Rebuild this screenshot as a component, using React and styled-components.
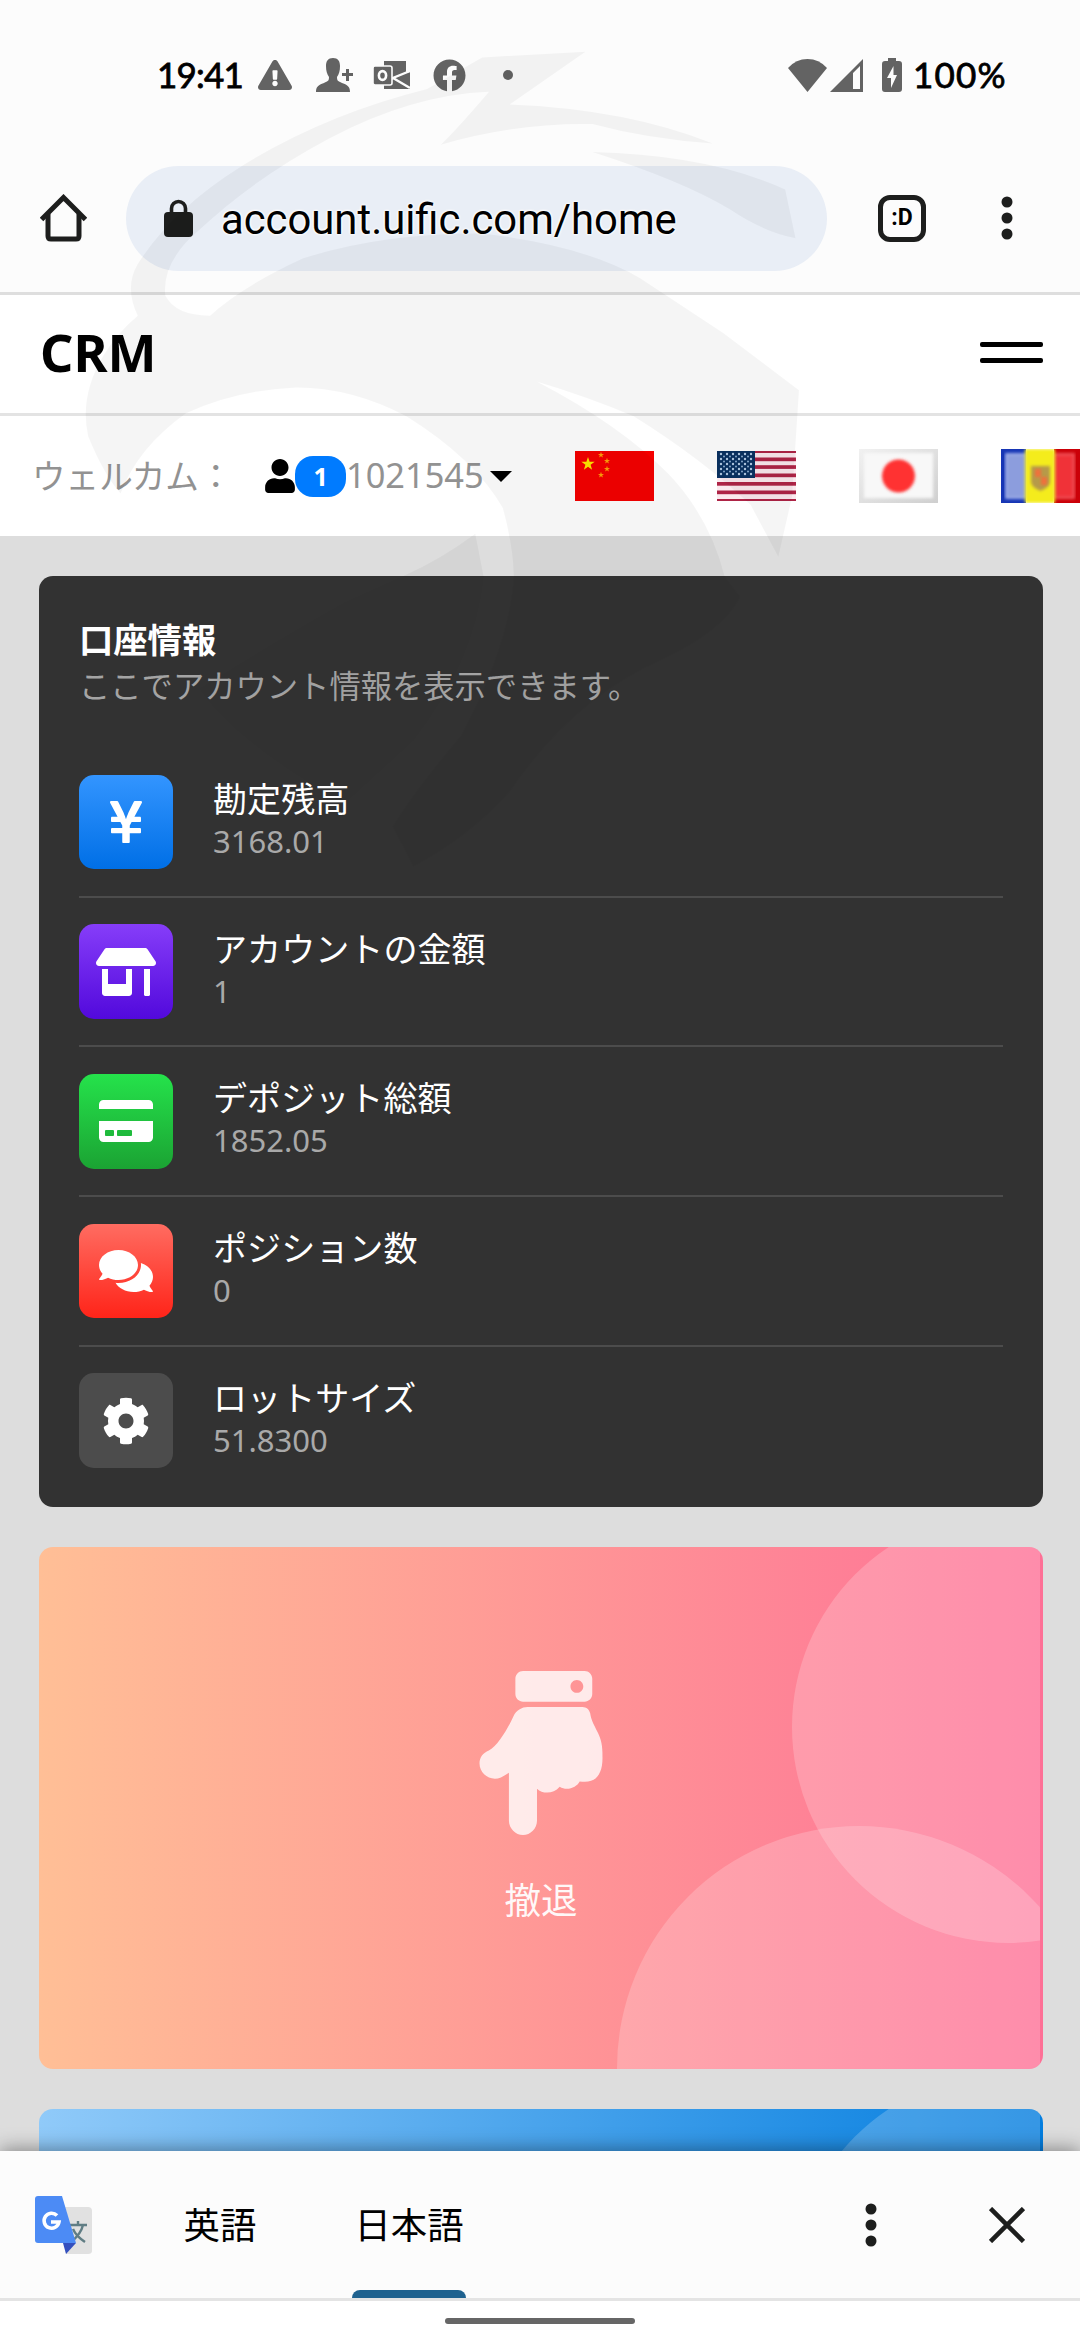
import styled, { createGlobalStyle, css } from "styled-components";
import {
  FaCog,
  FaComments,
  FaCreditCard,
  FaExclamationTriangle,
  FaFacebook,
  FaHandPointDown,
  FaStoreAlt,
  FaUser,
  FaYenSign,
} from "react-icons/fa";

const GlobalStyle = createGlobalStyle`
  * {
    box-sizing: border-box;
  }
  body {
    margin: 0;
    background: #ffffff;
    font-family: "Noto Sans", "Noto Sans CJK JP", sans-serif;
  }
  svg {
    display: block;
    flex-shrink: 0;
  }
`;

const Screen = styled.div`
  position: relative;
  display: flex;
  flex-direction: column;
  width: 1080px;
  height: 2340px;
  overflow: hidden;
`;

/* ---------- phone status bar ---------- */

const StatusBar = styled.div`
  display: flex;
  align-items: center;
  height: 150px;
  padding-left: 157px;
  background: #fcfcfc;
  color: #636363;
`;

const StatusText = styled.span`
  width: ${(p) => p.$width}px;
  margin-left: ${(p) => p.$ml || 0}px;
  padding-bottom: 2px;
  color: #000;
  font-family: Lato, sans-serif;
  font-size: 35px;
  font-weight: 400;
  line-height: 42px;
  letter-spacing: ${(p) => p.$spacing || 0}px;
  white-space: nowrap;
  -webkit-text-stroke: 0.8px #000;
`;

const StatusIcon = styled.span`
  display: flex;
  margin-left: ${(p) => p.$ml}px;
`;

const Spacer = styled.span`
  flex: 1;
`;

const Dot = styled.span`
  width: 10px;
  height: 10px;
  margin-left: 37px;
  border-radius: 50%;
  background: #636363;
`;

/* ---------- browser toolbar ---------- */

const Toolbar = styled.div`
  display: flex;
  align-items: center;
  height: 145px;
  padding: 0 66px 6px 40px;
  border-bottom: 3px solid #dedede;
  background: #fcfcfc;
`;

const AddressBar = styled.div`
  display: flex;
  align-items: center;
  width: 701px;
  height: 105px;
  margin: 0 51px 0 39px;
  padding-left: 38px;
  border-radius: 53px;
  background: #e9eef6;
`;

const Url = styled.span`
  margin-left: 28px;
  padding-top: 4px;
  color: #000;
  font-family: Roboto, sans-serif;
  font-size: 41.8px;
  line-height: 50px;
  white-space: nowrap;
  text-shadow: 0 0 3px #fff, 0 0 3px #fff, 0 0 3px #fff;
`;

const TabCount = styled.div`
  display: flex;
  align-items: center;
  justify-content: center;
  width: 48px;
  height: 47px;
  margin-right: 75px;
  border: 5px solid #1d1e1d;
  border-radius: 12px;
  color: #000;
  font: bold 23px/30px Roboto, sans-serif;
`;

/* ---------- site header ---------- */

const SiteHeader = styled.header`
  display: flex;
  align-items: center;
  justify-content: space-between;
  height: 121px;
  padding: 0 37px 0 40px;
  border-bottom: 3px solid #e3e3e3;
`;

const Brand = styled.h1`
  margin: 0;
  padding-bottom: 5px;
  font-size: 52px;
  font-weight: 700;
  line-height: 60px;
`;

const MenuButton = styled.div`
  display: flex;
  flex-direction: column;
  gap: 11px;
  padding-bottom: 3px;
`;

const MenuLine = styled.span`
  width: 63px;
  height: 5px;
  border-radius: 2px;
  background: #000;
`;

const WelcomeRow = styled.div`
  display: flex;
  align-items: center;
  height: 120px;
  padding-left: 32px;
  overflow: hidden;
  color: #929292;
`;

const Welcome = styled.span`
  width: 235px;
  padding-bottom: 3px;
  font-family: "Noto Sans CJK JP", sans-serif;
  font-size: 33.6px;
  line-height: 40px;
  white-space: nowrap;
`;

const UserIcon = styled(FaUser)`
  width: 30px;
  height: 34px;
  color: #000;
`;

const Badge = styled.span`
  display: flex;
  align-items: center;
  justify-content: center;
  width: 51px;
  height: 41px;
  border-radius: 18px;
  background: #007bff;
  color: #fff;
  font-size: 25px;
  font-weight: 700;
`;

const AccountId = styled.span`
  width: 145px;
  padding-bottom: 2px;
  font-size: 34.4px;
  line-height: 40px;
`;

const Caret = styled.span`
  margin: 1px 63px 0 0;
  border: 11px solid transparent;
  border-top-color: #000;
  border-bottom: 0;
`;

const Flags = styled.div`
  display: flex;
  align-items: center;
  gap: 63px;
`;

/* ---------- page content ---------- */

const Content = styled.main`
  display: flex;
  flex: 1;
  flex-direction: column;
  gap: 40px;
  min-height: 0;
  padding: 40px 37px 0 39px;
  overflow: hidden;
  background: #dddddd;
`;

const AccountCard = styled.section`
  flex-shrink: 0;
  height: 931px;
  padding: 43px 40px 0;
  border-radius: 14px;
  background: #323232;
`;

const CardTitle = styled.h2`
  margin: 0;
  color: #fff;
  font-size: 34.3px;
  font-weight: 700;
  line-height: 42px;
`;

const CardSubtitle = styled.p`
  height: 87px;
  margin: 0;
  color: #a4a4a4;
  font-size: 31.3px;
  line-height: 50px;
  white-space: nowrap;
`;

const ItemRow = styled.div`
  display: flex;
  align-items: center;
  height: 149.7px;
  border-bottom: 2px solid ${(p) => (p.$last ? "transparent" : "#4c4c4c")};
`;

const IconBox = styled.div`
  display: flex;
  align-items: center;
  justify-content: center;
  width: 94px;
  height: 94.7px;
  margin-right: 40px;
  border-radius: 15px;
  background: linear-gradient(${(p) => p.$from}, ${(p) => p.$to});
  color: #fff;

  svg {
    width: 60px;
    height: 48px;
  }
`;

const ItemText = styled.div`
  display: flex;
  flex-direction: column;
  padding-bottom: 6px;
  color: #fff;
  font-size: 34.1px;
  line-height: 44px;
`;

const ItemValue = styled.span`
  color: #a9a9a9;
  font-size: 31px;
  line-height: 40px;
`;

const palettes = {
  danger: css`
    background: linear-gradient(to right, #ffbf96, #fe7096);
  `,
  info: css`
    background: linear-gradient(to right, #90caf9, #047edf 99%);
  `,
};

const ActionCard = styled.section`
  position: relative;
  display: flex;
  flex-direction: column;
  flex-shrink: 0;
  align-items: center;
  height: ${(p) => p.$height}px;
  padding-top: 124px;
  border-radius: 14px;
  overflow: hidden;
  color: rgba(255, 255, 255, 0.8);
  ${(p) => palettes[p.$tone]}
`;

const Circles = styled.svg`
  position: absolute;
  top: 0;
  right: 3px;
`;

const ActionLabel = styled.span`
  margin-top: 39px;
  color: rgba(255, 255, 255, 0.95);
  font-size: 36.5px;
  line-height: 52px;
`;

/* ---------- translate bar ---------- */

const TranslateBar = styled.div`
  position: relative;
  display: flex;
  align-items: center;
  height: 150px;
  padding: 0 55px 0 34px;
  border-bottom: 3px solid #e4e4e4;
  background: #fcfcfc;
  box-shadow: 0 -2px 18px rgba(0, 0, 0, 0.4);
`;

const Language = styled.div`
  display: flex;
  flex-direction: column;
  align-items: center;
  align-self: stretch;
  justify-content: center;
  width: ${(p) => p.$width}px;
  margin-left: ${(p) => p.$ml}px;
  padding-bottom: 4px;
  color: #000;
  font-family: "Noto Sans CJK JP", sans-serif;
  font-size: 36.4px;
  line-height: 50px;
  white-space: nowrap;
`;

const ActiveLine = styled.span`
  position: absolute;
  bottom: 0;
  width: 114px;
  height: 8px;
  border-radius: 8px 8px 0 0;
  background: #1f628f;
`;

const DotsSlot = styled.div`
  margin-right: 112px;
`;

const NavBar = styled.div`
  position: relative;
  display: flex;
  justify-content: center;
  height: 39px;
  padding-top: 17px;
  background: #fff;
`;

const NavPill = styled.span`
  width: 190px;
  height: 6px;
  border-radius: 3px;
  background: #666;
`;

const Watermark = styled.svg`
  position: absolute;
  top: 0;
  left: 0;
  z-index: 2;
  pointer-events: none;
`;

const items = [
  { label: "勘定残高", value: "3168.01", icon: <FaYenSign />, from: "#3395ff", to: "#006fe6" },
  { label: "アカウントの金額", value: "1", icon: <FaStoreAlt />, from: "#863df9", to: "#5209dc" },
  { label: "デポジット総額", value: "1852.05", icon: <FaCreditCard />, from: "#25e24b", to: "#1ba333" },
  { label: "ポジション数", value: "0", icon: <FaComments />, from: "#ff6c61", to: "#ff2419" },
  { label: "ロットサイズ", value: "51.8300", icon: <FaCog />, from: "#4c4c4c", to: "#4c4c4c" },
];

const MoreDots = () => (
  <svg width="12" height="44" viewBox="0 0 12 44" fill="#1d1e1d">
    <circle cx="6" cy="6" r="5.5" />
    <circle cx="6" cy="22" r="5.5" />
    <circle cx="6" cy="38" r="5.5" />
  </svg>
);

const StatusIcons = () => (
  <>
    <StatusIcon $ml={18}>
      <FaExclamationTriangle size={34} />
    </StatusIcon>
    <StatusIcon $ml={23}>
      <svg width="38" height="36" viewBox="0 0 38 36" fill="currentColor">
        <path d="M18 1c5 0 7 3 7 8 0 5-1 8-3 11 0 4 1 4 5 6 6 2 8 4 8 9H1c0-5 2-7 8-9 4-2 5-2 5-6-2-3-3-6-3-11 0-5 2-8 7-8z" />
        <path d="M31 12h3v4h4v3h-4v5h-3v-5h-4v-3h4z" />
      </svg>
    </StatusIcon>
    <StatusIcon $ml={20}>
      <svg width="38" height="30" viewBox="0 0 38 30">
        <path d="M11 1h22v12l4-1v17H11z" fill="#636363" />
        <path d="M37 11L20 18l17 10M20 18l-5 3" fill="none" stroke="#fcfcfc" strokeWidth="2.4" />
        <rect x="0" y="6" width="19" height="19" rx="2" fill="#636363" stroke="#fcfcfc" strokeWidth="1.6" />
        <ellipse cx="9.5" cy="15.5" rx="3.6" ry="4.4" fill="none" stroke="#fcfcfc" strokeWidth="2.6" />
      </svg>
    </StatusIcon>
    <StatusIcon $ml={22}>
      <FaFacebook size={33} />
    </StatusIcon>
    <Dot />
  </>
);

const SignalIcons = () => (
  <>
    <svg width="39" height="33" viewBox="0 0 39 33" fill="currentColor">
      <path d="M19.5 33L0 9Q8 0 19.5 0T39 9z" />
    </svg>
    <StatusIcon $ml={3}>
      <svg width="33" height="33" viewBox="0 0 33 33" fill="currentColor">
        <path fillRule="evenodd" d="M33 0v33H0zM30 7l-7 7v16h7z" />
      </svg>
    </StatusIcon>
    <StatusIcon $ml={19}>
      <svg width="20" height="34" viewBox="0 0 20 34" fill="currentColor">
        <path fillRule="evenodd" d="M6 0h8v3h3q3 0 3 3v25q0 3-3 3H3q-3 0-3-3V6q0-3 3-3h3zM11.5 8L5 20h4v10l6-13h-3.5z" />
      </svg>
    </StatusIcon>
  </>
);

const HomeIcon = () => (
  <svg width="47" height="48" viewBox="0 0 47 48" fill="none" stroke="#1d1e1d" strokeWidth="5">
    <path d="M1.5 25.5L23.5 3.5l22 22" />
    <path d="M8 20v22q0 3 3 3h25q3 0 3-3V20" />
  </svg>
);

const LockIcon = () => (
  <svg width="29" height="38" viewBox="0 0 29 38">
    <rect y="13" width="29" height="25" rx="4" fill="#1d1e1d" />
    <path d="M7.5 15V9.5a7 7 0 0114 0V15" fill="none" stroke="#1d1e1d" strokeWidth="3.6" />
  </svg>
);

const starPath = "M0-7L1.6-2.2H6.7L2.6.8 4.1 5.7 0 2.7-4.1 5.7-2.6.8-6.7-2.2H-1.6z";

const ChinaFlag = () => (
  <svg width="79" height="50" viewBox="0 0 79 50">
    <rect width="79" height="50" fill="#f50000" />
    <path d={starPath} fill="#ffe600" transform="translate(13 13)" />
    {[[26, 4], [32, 10], [32, 18], [26, 24]].map(([x, y]) => (
      <path key={y} d={starPath} fill="#ffa00a" transform={`translate(${x} ${y}) scale(.46)`} />
    ))}
  </svg>
);

const UsaFlag = () => (
  <svg width="79" height="50" viewBox="0 0 79 50">
    <rect width="79" height="50" fill="#fbe9ee" />
    <rect width="79" height="2" fill="#ae2446" />
    {[6.5, 14.2, 22.5, 31, 39.5].map((y) => (
      <rect key={y} y={y} width="79" height="3.7" fill="#ae2446" />
    ))}
    <rect y="48" width="79" height="2" fill="#ae2446" />
    <rect width="38" height="27" fill="#0a3161" />
    {[3, 8, 13, 18, 23].map((y) =>
      [4, 10, 16, 22, 28, 34].map((x) => (
        <circle key={`${x}-${y}`} cx={x} cy={y} r="1.2" fill="#b4cbe6" />
      ))
    )}
    {[5.5, 10.5, 15.5, 20.5].map((y) =>
      [7, 13, 19, 25, 31].map((x) => (
        <circle key={`${x}-${y}`} cx={x} cy={y} r="1" fill="#8fb0d4" />
      ))
    )}
  </svg>
);

const JapanFlag = () => (
  <svg width="79" height="54" viewBox="0 0 79 54">
    <defs>
      <linearGradient id="jpEdge" x1="0" y1="0" x2="1" y2="1">
        <stop offset="0" stopColor="#f1f1f1" />
        <stop offset="1" stopColor="#cfcfcf" />
      </linearGradient>
      <filter id="soft">
        <feGaussianBlur stdDeviation="1.5" />
      </filter>
    </defs>
    <rect width="79" height="54" fill="url(#jpEdge)" />
    <rect x="5" y="4" width="69" height="45" fill="#f8f8f8" filter="url(#soft)" />
    <circle cx="39.5" cy="27" r="16.5" fill="#ff3333" filter="url(#soft)" />
  </svg>
);

const AndorraFlag = () => (
  <svg width="79" height="54" viewBox="0 0 79 54">
    <rect width="25" height="54" fill="#1736b5" />
    <rect x="5" y="5" width="20" height="44" fill="#8c9ddd" stroke="#b3c0f2" strokeWidth="1.5" filter="url(#soft)" />
    <rect x="53" width="26" height="54" fill="#cb0008" />
    <rect x="53" y="5" width="20" height="44" fill="#f03038" stroke="#f5656a" strokeWidth="1.5" filter="url(#soft)" />
    <rect x="24" width="30" height="54" fill="#f4ec1c" filter="url(#soft)" />
    <path d="M30 17h19v16q0 5-9.5 9-9.5-4-9.5-9z" fill="#b69a48" filter="url(#soft)" />
    <path d="M34 20h6v8h6v8h-6v-8h-6z" fill="#f0703a" filter="url(#soft)" />
  </svg>
);

const CardCircles = () => (
  <Circles width="1001" height="522" viewBox="0 0 1001 522" fill="#fff" fillOpacity="0.2">
    <circle cx="969" cy="180" r="216" />
    <circle cx="820" cy="521" r="242" />
  </Circles>
);

const TranslateIcon = () => (
  <svg width="58" height="60" viewBox="0 0 58 60">
    <path d="M28 12h26q4 0 4 4v40q0 3-4 3H32z" fill="#e1e1e1" />
    <path d="M35 30h18M44 26v4M49 30q-2 9-12 17M39 34q3 7 12 13" fill="none" stroke="#607d84" strokeWidth="2.4" />
    <path d="M29 48h13L32 59z" fill="#3450be" />
    <path d="M4 1h24l14 47H4q-3 0-3-3V4q0-3 3-3z" fill="#4c8bf5" />
    <path d="M23 20.5a7.5 7.5 0 10 2 6.5h-8" fill="none" stroke="#fff" strokeWidth="3.6" />
  </svg>
);

const CloseIcon = () => (
  <svg width="36" height="36" viewBox="0 0 36 36" stroke="#1d1e1d" strokeWidth="4.6">
    <path d="M1.5 1.5l33 33M34.5 1.5l-33 33" />
  </svg>
);

// Faint bird emblem lying over the upper part of the page
const Emblem = () => (
  <Watermark width="1080" height="900" viewBox="0 0 1568 1568" preserveAspectRatio="none" fill="#000">
    <path
      fillOpacity="0.04"
      d="M850 90L740 182Q910 190 1035 250Q940 242 860 216Q750 214 640 252Q660 230 710 160Q600 165 480 240Q370 310 290 400Q235 455 240 515Q255 550 305 550Q350 500 440 450Q560 405 700 407Q850 428 930 485L1050 580L1160 680L1150 865L1130 970L1090 880Q1020 800 920 725Q850 690 780 665Q900 740 970 825Q1030 900 1052 1004H746Q745 950 730 885Q690 800 590 725Q510 675 430 675Q340 680 270 720Q200 780 175 860Q150 825 128 760Q115 690 150 620Q170 580 200 550Q180 500 200 460Q250 365 350 290Q470 200 620 155L700 100Z"
    />
    <path fillOpacity="0.04" d="M860 265Q1030 270 1140 330L1155 415Q1110 405 1060 365Q990 315 860 265Z" />
    <path fillOpacity="0.04" d="M690 930L702 1004H585Q640 975 690 930Z" />
    <path fillOpacity="0.022" d="M746 1004H1052L1075 1040Q1050 1100 960 1150Q830 1220 740 1380Q680 1460 600 1510L570 1440Q600 1380 670 1280Q740 1120 746 1004Z" />
    <path fillOpacity="0.016" d="M585 1004H702Q690 1150 600 1290L500 1400Q340 1290 290 1200Q410 1110 500 1050Z" />
  </Watermark>
);

const App = () => {
  return (
    <Screen>
      <GlobalStyle />
      <StatusBar>
        <StatusText $width={83} $spacing={-0.8}>
          19:41
        </StatusText>
        <StatusIcons />
        <Spacer />
        <SignalIcons />
        <StatusText $width={167} $ml={11} $spacing={1.2}>
          100%
        </StatusText>
      </StatusBar>

      <Toolbar>
        <HomeIcon />
        <AddressBar>
          <LockIcon />
          <Url>account.uific.com/home</Url>
        </AddressBar>
        <TabCount>:D</TabCount>
        <MoreDots />
      </Toolbar>

      <SiteHeader>
        <Brand>CRM</Brand>
        <MenuButton>
          <MenuLine />
          <MenuLine />
        </MenuButton>
      </SiteHeader>

      <WelcomeRow>
        <Welcome>ウェルカム：</Welcome>
        <UserIcon />
        <Badge>1</Badge>
        <AccountId>1021545</AccountId>
        <Caret />
        <Flags>
          <ChinaFlag />
          <UsaFlag />
          <JapanFlag />
          <AndorraFlag />
        </Flags>
      </WelcomeRow>

      <Content>
        <AccountCard>
          <CardTitle>口座情報</CardTitle>
          <CardSubtitle>ここでアカウント情報を表示できます。</CardSubtitle>
          {items.map((item, i) => (
            <ItemRow key={item.label} $last={i === items.length - 1}>
              <IconBox $from={item.from} $to={item.to}>
                {item.icon}
              </IconBox>
              <ItemText>
                {item.label}
                <ItemValue>{item.value}</ItemValue>
              </ItemText>
            </ItemRow>
          ))}
        </AccountCard>

        <ActionCard $tone="danger" $height={522}>
          <CardCircles />
          <FaHandPointDown size={164} />
          <ActionLabel>撤退</ActionLabel>
        </ActionCard>

        <ActionCard $tone="info" $height={522}>
          <CardCircles />
        </ActionCard>
      </Content>

      <TranslateBar>
        <TranslateIcon />
        <Language $width={72} $ml={92}>
          英語
        </Language>
        <Language $width={114} $ml={96}>
          日本語
          <ActiveLine />
        </Language>
        <Spacer />
        <DotsSlot>
          <MoreDots />
        </DotsSlot>
        <CloseIcon />
      </TranslateBar>
      <NavBar>
        <NavPill />
      </NavBar>
      <Emblem />
    </Screen>
  );
};

export default App;
